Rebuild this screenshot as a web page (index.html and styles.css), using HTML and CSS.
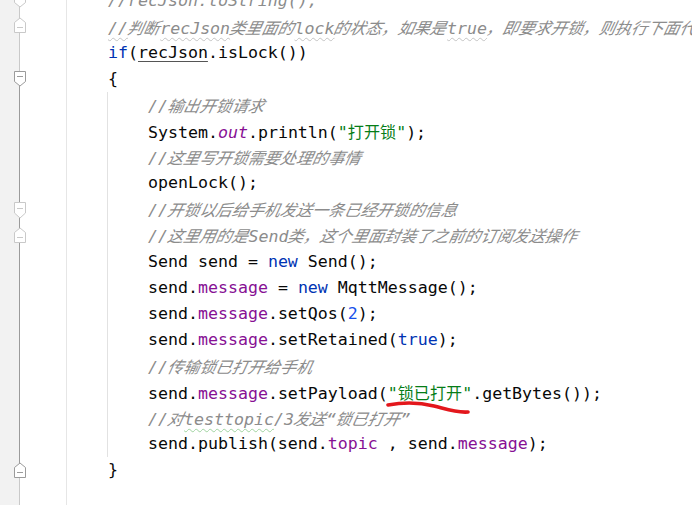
FILE: index.html
```html
<!DOCTYPE html>
<html>
<head>
<meta charset="utf-8">
<link rel="stylesheet" href="styles.css">
</head>
<body>
<div class="editor">
  <svg class="gutter" width="66" height="505" viewBox="0 0 66 505">
    <rect x="0" y="0" width="19.5" height="505" fill="#f2f2f2"/>
    <line x1="19.5" y1="0" x2="19.5" y2="86" stroke="#c9c9c9" stroke-width="1"/>
    <line x1="19.5" y1="86" x2="19.5" y2="467" stroke="#9b9b9b" stroke-width="1"/>
    <line x1="19.5" y1="477" x2="19.5" y2="505" stroke="#c9c9c9" stroke-width="1"/>
    <g fill="#fff" stroke="#c9c9c9" stroke-width="1">
      <polygon points="14.5,-5 25.5,-5 25.5,2.5 20,7 14.5,2.5"/>
      <polygon points="20,18 25.5,22.5 25.5,32.5 14.5,32.5 14.5,22.5"/>
      <polygon points="14.5,202.5 25.5,202.5 25.5,213 20,218 14.5,213"/>
      <polygon points="20,228 25.5,232.5 25.5,242.5 14.5,242.5 14.5,232.5"/>
    </g>
    <g stroke="#c9c9c9" stroke-width="1">
      <line x1="17" y1="27.5" x2="23" y2="27.5"/>
      <line x1="17" y1="208.5" x2="23" y2="208.5"/>
      <line x1="17" y1="237.5" x2="23" y2="237.5"/>
    </g>
    <g fill="#fff" stroke="#9b9b9b" stroke-width="1">
      <polygon points="14.5,71.5 25.5,71.5 25.5,81.5 20,86 14.5,81.5"/>
      <polygon points="20,463 25.5,467.5 25.5,477.5 14.5,477.5 14.5,467.5"/>
    </g>
    <g stroke="#9b9b9b" stroke-width="1">
      <line x1="17" y1="76.5" x2="23" y2="76.5"/>
      <line x1="17" y1="472.5" x2="23" y2="472.5"/>
    </g>
  </svg>
  <div class="code">
    <div class="l"><span class="cm">//recJson.toString();</span></div>
    <div class="l"><span class="cm typo">//<span class="c">判断</span>recJson<span class="c">类里面的</span>lock<span class="c">的状态，如果是</span>true<span class="c">，即要求开锁，则执行下面代码</span></span></div>
    <div class="l"><span class="k">if</span>(<span class="ul">recJson</span>.isLock())</div>
    <div class="l">{</div>
    <div class="block">
      <div class="l"><span class="cm">//<span class="c">输出开锁请求</span></span></div>
      <div class="l">System.<span class="f it">out</span>.println(<span class="s">"<span class="c">打开锁</span>"</span>);</div>
      <div class="l"><span class="cm">//<span class="c">这里写开锁需要处理的事情</span></span></div>
      <div class="l">openLock();</div>
      <div class="l"><span class="cm">//<span class="c">开锁以后给手机发送一条已经开锁的信息</span></span></div>
      <div class="l"><span class="cm">//<span class="c">这里用的是</span>Send<span class="c">类，这个里面封装了之前的订阅发送操作</span></span></div>
      <div class="l">Send send = <span class="k">new</span> Send();</div>
      <div class="l">send.<span class="f">message</span> = <span class="k">new</span> MqttMessage();</div>
      <div class="l">send.<span class="f">message</span>.setQos(<span class="n">2</span>);</div>
      <div class="l">send.<span class="f">message</span>.setRetained(<span class="k">true</span>);</div>
      <div class="l"><span class="cm">//<span class="c">传输锁已打开给手机</span></span></div>
      <div class="l">send.<span class="f">message</span>.setPayload(<span class="s">"<span class="c">锁已打开</span>"</span>.getBytes());</div>
      <div class="l"><span class="cm">//<span class="c">对</span><span class="typo2">testtopic</span>/3<span class="c">发送</span>“<span class="c">锁已打开</span>”</span></div>
      <div class="l">send.publish(send.<span class="f">topic</span> , send.<span class="f">message</span>);</div>
    </div>
    <div class="l">}</div>
  </div>
</div>
<svg class="mark" width="90" height="24" viewBox="0 0 90 24">
  <path d="M4 6 C 20 3, 38 4, 50 7 S 72 14, 84 13" fill="none" stroke="#e3171c" stroke-width="3.6" stroke-linecap="round"/>
</svg>
</body>
</html>
```

FILE: styles.css
```css
html, body {
  margin: 0;
  padding: 0;
  background: #ffffff;
}
body {
  width: 692px;
  height: 505px;
  overflow: hidden;
  position: relative;
}
.editor {
  display: flex;
  height: 505px;
  overflow: hidden;
}
.gutter {
  flex: 0 0 66px;
  display: block;
  border-right: 1px solid #e6e6e6;
}
.code {
  flex: 1 1 auto;
  min-width: 0;
  margin-top: -12.5px;
  padding-left: 41px;
  font-family: "DejaVu Sans Mono", "Liberation Mono", "Noto Sans CJK SC", monospace;
  font-size: 16.6px;
  line-height: 26.12px;
  color: #080808;
  overflow: hidden;
}
.block {
  margin-left: -1px;
  border-left: 1px solid #e2e2e2;
  padding-left: 40px;
}
.l {
  height: 26.12px;
  white-space: pre;
}
.c {
  font-family: "Noto Sans CJK SC", sans-serif;
  font-size: 16.1px;
}
.cm .c {
  display: inline-block;
  transform: skewX(-12deg);
}
.k { color: #0033b3; }
.f { color: #871094; }
.it { font-style: italic; }
.s { color: #067d17; }
.n { color: #1750eb; }
.cm {
  color: #8c8c8c;
  font-style: italic;
}
.typo {
  text-decoration: underline wavy #c4c4c4;
  text-decoration-thickness: 1px;
  text-underline-offset: 3px;
}
.typo2 {
  text-decoration: underline wavy #9fd39f;
  text-decoration-thickness: 1px;
  text-underline-offset: 3px;
}
.ul {
  text-decoration: underline #555;
  text-decoration-thickness: 1px;
  text-underline-offset: 3px;
}
.mark {
  position: absolute;
  left: 384px;
  top: 399px;
}
```
